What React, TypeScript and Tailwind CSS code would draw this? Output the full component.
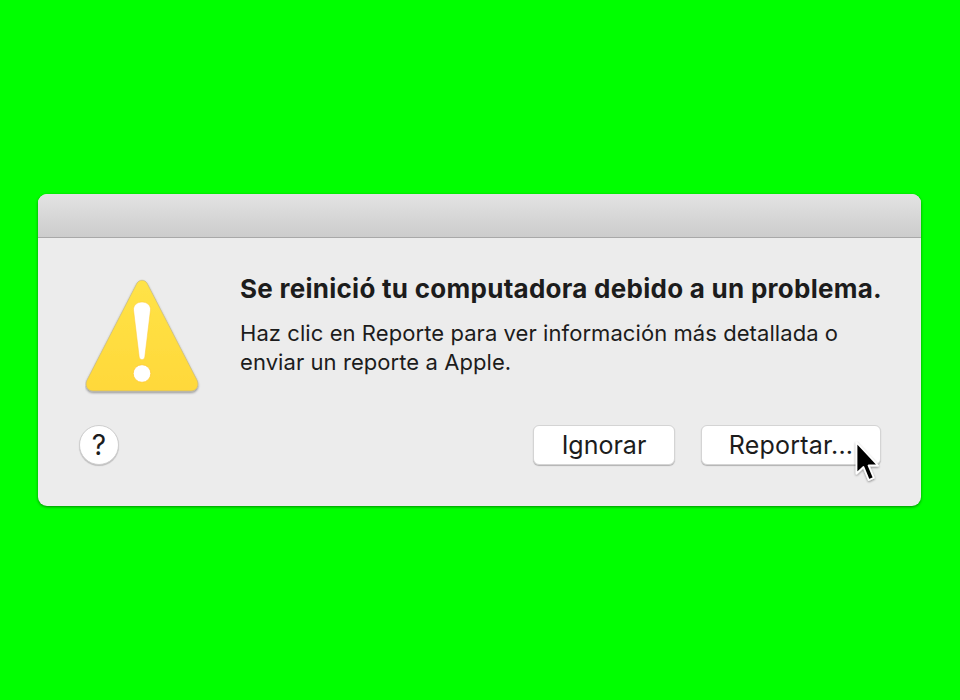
function WarningIcon() {
  return (
    <svg width="116" height="116" viewBox="0 0 116 116" className="block">
      <defs>
        <linearGradient id="warnFill" x1="0" y1="0" x2="0" y2="1">
          <stop offset="0" stopColor="#ffe347" />
          <stop offset="1" stopColor="#ffd83a" />
        </linearGradient>
        <filter id="warnShadow" x="-10%" y="-10%" width="120%" height="125%">
          <feDropShadow dx="0" dy="1.5" stdDeviation="1.2" floodColor="#000" floodOpacity="0.4" />
        </filter>
      </defs>
      <path
        d="M52 4 C54.5 0.3 59.5 0.3 62 4 L112 101 C114.5 106 112 112 106 112 L8 112 C2 112 -0.5 106 2 101 Z"
        fill="url(#warnFill)"
        stroke="#bdb48c"
        strokeWidth="0.6"
        filter="url(#warnShadow)"
      />
      <path
        d="M57 23 C62 23 65.8 26.5 65.5 31 L59.8 78 C59.3 81.5 54.7 81.5 54.2 78 L48.5 31 C48.2 26.5 52 23 57 23 Z"
        fill="#fff"
        stroke="#ffc933"
        strokeWidth="0.5"
      />
      <circle cx="57" cy="94.5" r="8.8" fill="#fff" stroke="#ffc933" strokeWidth="0.8" />
    </svg>
  )
}

function Cursor() {
  return (
    <svg width="28" height="46" viewBox="0 0 28 46" className="absolute left-[853px] top-[440px]">
      <defs>
        <filter id="cursorShadow" x="-30%" y="-20%" width="160%" height="140%">
          <feDropShadow dx="0" dy="1" stdDeviation="1" floodColor="#000" floodOpacity="0.45" />
        </filter>
      </defs>
      <path
        d="M3.5 2.5 L3.5 33.5 L10.5 27 L15.8 40 L20.8 37.8 L15.5 25.5 L25 25.5 Z"
        fill="#000"
        stroke="#fff"
        strokeWidth="1.8"
        strokeLinejoin="round"
        filter="url(#cursorShadow)"
      />
    </svg>
  )
}

export default function App() {
  return (
    <div className="relative h-[700px] w-[960px] overflow-hidden bg-[#00ff00] pl-[38px] pt-[194px] font-['Inter',sans-serif] text-[#1c1c1c]">
      <div className="flex h-[312px] w-[883px] flex-col overflow-hidden rounded-[9px] bg-[#ececec] shadow-[0_1px_3px_rgba(0,0,0,0.45)]">
        {/* Title bar */}
        <div className="h-[44px] shrink-0 border-b border-[#a8a8a8] bg-gradient-to-b from-[#e3e3e3] to-[#cccccc]" />

        <div className="flex flex-1 flex-col pl-[41px] pr-[40px]">
          <div className="flex">
            <div className="w-[161px] shrink-0 pl-[6px] pt-[41px]">
              <WarningIcon />
            </div>
            <div className="pt-[35px]">
              <h1 className="whitespace-nowrap text-[26px] font-bold leading-[32px] tracking-[0.27px]">
                Se reinició tu computadora debido a un problema.
              </h1>
              <p className="mt-[14px] whitespace-nowrap text-[22px] leading-[29px] tracking-[0.07px]">
                Haz clic en Reporte para ver información más detallada o
                <br />
                enviar un reporte a Apple.
              </p>
            </div>
          </div>

          <div className="mt-[30px] flex items-center">
            <button className="flex h-[40px] w-[40px] items-center justify-center rounded-full border border-[#cfcfcf] bg-white text-[28px] leading-none text-[#1c1c1c] shadow-[0_1px_1px_rgba(0,0,0,0.2)]">
              ?
            </button>
            <div className="ml-auto flex gap-[26px]">
              <button className="h-[40px] w-[142px] rounded-[6px] border border-[#d4d4d4] bg-white text-[25px] leading-none shadow-[0_1px_1px_rgba(0,0,0,0.25)]">
                Ignorar
              </button>
              <button className="h-[40px] w-[180px] rounded-[6px] border border-[#d4d4d4] bg-white text-[25px] leading-none tracking-[0.2px] shadow-[0_1px_1px_rgba(0,0,0,0.25)]">
                Reportar...
              </button>
            </div>
          </div>
        </div>
      </div>
      <Cursor />
    </div>
  )
}
